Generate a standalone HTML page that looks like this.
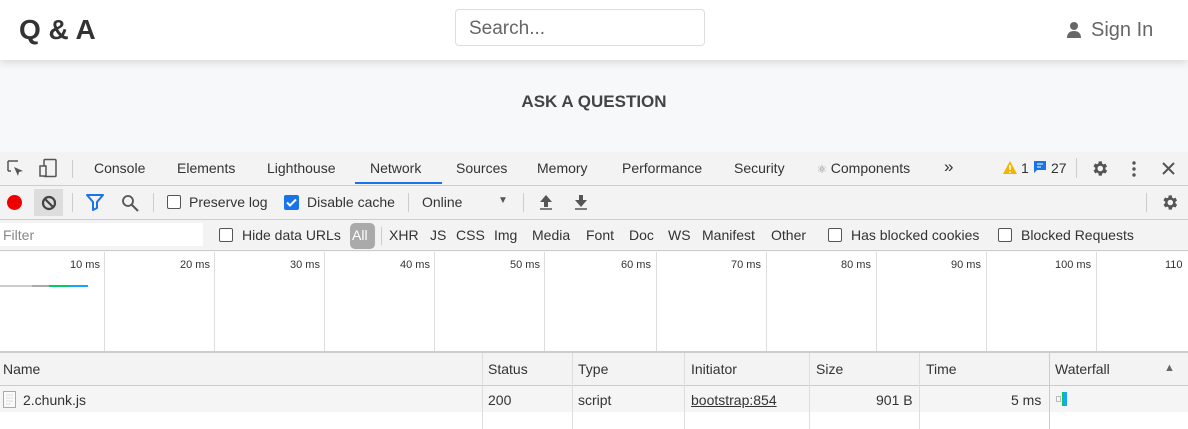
<!DOCTYPE html>
<html><head><style>
*{margin:0;padding:0;box-sizing:border-box}
body{width:1188px;height:429px;overflow:hidden;background:#f7f8fa;font-family:"Liberation Sans",sans-serif;position:relative;color:#333}
.a{position:absolute;white-space:nowrap}
.t{font-size:14px;color:#333}
.cb{position:absolute;width:14px;height:14px;border:1px solid #555;border-radius:2px;background:#fff}
.vl{position:absolute;width:1px;background:#ccc}
</style></head><body>
<div class="a" style="left:0;top:0;width:1188px;height:60px;background:#fff;box-shadow:0 3px 8px rgba(0,0,0,.12)"></div>
<div class="a" style="left:19px;top:14px;font-size:28px;font-weight:bold;color:#333">Q &amp; A</div>
<div class="a" style="left:455px;top:9px;width:250px;height:37px;border:1px solid #ddd;border-radius:4px;background:#fff;font-size:19px;color:#666;padding:8px 13px">Search...</div>
<svg class="a" style="left:1066px;top:21px" width="16" height="18" viewBox="0 0 16 18"><circle cx="8" cy="5" r="4" fill="#666"/><path d="M1 17c0-5 3-7 7-7s7 2 7 7z" fill="#666"/></svg>
<div class="a" style="left:1091px;top:19px;font-size:20px;color:#666">Sign In</div>
<div class="a" style="left:0;top:92px;width:1188px;text-align:center;font-size:17px;font-weight:bold;color:#444">ASK A QUESTION</div>

<!-- tab bar -->
<div class="a" style="left:0;top:152px;width:1188px;height:34px;background:#f3f3f3;border-bottom:1px solid #ccc"></div>
<svg class="a" style="left:6px;top:159px" width="20" height="20" viewBox="0 0 20 20"><path d="M2 2h10M2 2v10M2 12h3" stroke="#555" stroke-width="1.5" fill="none"/><path d="M8 8l9 4-4 1-1 4z" fill="#555"/></svg>
<svg class="a" style="left:38px;top:158px" width="20" height="20" viewBox="0 0 20 20"><rect x="6" y="1.5" width="12" height="17" rx="1" stroke="#555" stroke-width="1.5" fill="none"/><rect x="2" y="8" width="6" height="10" stroke="#555" stroke-width="1.5" fill="#f3f3f3"/></svg>
<div class="vl" style="left:72px;top:160px;height:18px"></div>
<div class="a t" style="left:94px;top:160px">Console</div>
<div class="a t" style="left:177px;top:160px">Elements</div>
<div class="a t" style="left:267px;top:160px">Lighthouse</div>
<div class="a t" style="left:370px;top:160px">Network</div>
<div class="a" style="left:355px;top:182px;width:87px;height:2px;background:#1a73e8"></div>
<div class="a t" style="left:456px;top:160px">Sources</div>
<div class="a t" style="left:537px;top:160px">Memory</div>
<div class="a t" style="left:622px;top:160px">Performance</div>
<div class="a t" style="left:734px;top:160px">Security</div>
<div class="a t" style="left:817px;top:160px"><span style="color:#888;font-size:11px">⚛</span> Components</div>
<div class="a t" style="left:944px;top:157px;font-size:17px">»</div>
<svg class="a" style="left:1003px;top:161px" width="14" height="13" viewBox="0 0 14 13"><path d="M7 0l7 13H0z" fill="#f4b400"/><path d="M7 4v5M7 10.5v1.5" stroke="#fff" stroke-width="1.6"/></svg>
<div class="a t" style="left:1021px;top:160px">1</div>
<svg class="a" style="left:1034px;top:161px" width="12" height="12" viewBox="0 0 12 12"><path d="M0 0h12v9H3l-3 3z" fill="#1a73e8"/><path d="M3 3h6M3 6h4" stroke="#fff"/></svg>
<div class="a t" style="left:1051px;top:160px">27</div>
<div class="vl" style="left:1076px;top:158px;height:20px"></div>
<svg class="a" style="left:1090px;top:159px" width="19" height="19" viewBox="0 0 24 24"><path fill="#555" d="M19.4 13a7.5 7.5 0 000-2l2.1-1.6-2-3.5-2.5 1a7 7 0 00-1.7-1L15 3h-4l-.4 2.7a7 7 0 00-1.7 1l-2.5-1-2 3.5L6.6 11a7.5 7.5 0 000 2l-2.1 1.6 2 3.5 2.5-1a7 7 0 001.7 1L11 21h4l.4-2.7a7 7 0 001.7-1l2.5 1 2-3.5zM13 15.5a3.5 3.5 0 110-7 3.5 3.5 0 010 7z"/></svg>
<svg class="a" style="left:1131px;top:160px" width="6" height="18" viewBox="0 0 6 18"><circle cx="3" cy="3" r="1.7" fill="#555"/><circle cx="3" cy="9" r="1.7" fill="#555"/><circle cx="3" cy="15" r="1.7" fill="#555"/></svg>
<svg class="a" style="left:1162px;top:162px" width="13" height="13" viewBox="0 0 13 13"><path d="M1 1l11 11M12 1L1 12" stroke="#555" stroke-width="2"/></svg>

<!-- toolbar -->
<div class="a" style="left:0;top:186px;width:1188px;height:34px;background:#f3f3f3;border-bottom:1px solid #ccc"></div>
<div class="a" style="left:7px;top:195px;width:15px;height:15px;border-radius:50%;background:#e00"></div>
<div class="a" style="left:34px;top:189px;width:29px;height:27px;background:#ddd"></div>
<svg class="a" style="left:41px;top:195px" width="16" height="16" viewBox="0 0 16 16"><circle cx="8" cy="8" r="6" stroke="#444" stroke-width="2.2" fill="none"/><path d="M4 4l8 8" stroke="#444" stroke-width="2.2"/></svg>
<div class="vl" style="left:72px;top:193px;height:19px"></div>
<svg class="a" style="left:86px;top:194px" width="18" height="17" viewBox="0 0 18 17"><path d="M1 1h16l-6 7v6l-4 2V8z" stroke="#1a73e8" stroke-width="2" fill="none" stroke-linejoin="round"/></svg>
<svg class="a" style="left:121px;top:194px" width="18" height="18" viewBox="0 0 18 18"><circle cx="7" cy="7" r="5" stroke="#555" stroke-width="1.8" fill="none"/><path d="M11 11l6 6" stroke="#555" stroke-width="2"/></svg>
<div class="vl" style="left:153px;top:193px;height:19px"></div>
<div class="cb" style="left:167px;top:195px"></div>
<div class="a t" style="left:189px;top:194px">Preserve log</div>
<div class="a" style="left:284px;top:195px;width:15px;height:15px;border-radius:2px;background:#1a73e8"></div>
<svg class="a" style="left:284px;top:195px" width="15" height="15" viewBox="0 0 15 15"><path d="M3 7.5l3 3 6-6" stroke="#fff" stroke-width="2" fill="none"/></svg>
<div class="a t" style="left:307px;top:194px">Disable cache</div>
<div class="vl" style="left:408px;top:193px;height:19px"></div>
<div class="a t" style="left:422px;top:194px">Online</div>
<div class="a" style="left:498px;top:195px;font-size:10px;color:#555">▼</div>
<div class="vl" style="left:523px;top:193px;height:19px"></div>
<svg class="a" style="left:539px;top:194px" width="14" height="16" viewBox="0 0 14 16"><path d="M7 1l6 7H9v5H5V8H1z" fill="#555"/><path d="M1 15h12" stroke="#555" stroke-width="1.5"/></svg>
<svg class="a" style="left:574px;top:194px" width="14" height="16" viewBox="0 0 14 16"><path d="M7 13l6-7H9V1H5v5H1z" fill="#555"/><path d="M1 15h12" stroke="#555" stroke-width="1.5"/></svg>
<div class="vl" style="left:1146px;top:193px;height:19px"></div>
<svg class="a" style="left:1160px;top:193px" width="19" height="19" viewBox="0 0 24 24"><path fill="#555" d="M19.4 13a7.5 7.5 0 000-2l2.1-1.6-2-3.5-2.5 1a7 7 0 00-1.7-1L15 3h-4l-.4 2.7a7 7 0 00-1.7 1l-2.5-1-2 3.5L6.6 11a7.5 7.5 0 000 2l-2.1 1.6 2 3.5 2.5-1a7 7 0 001.7 1L11 21h4l.4-2.7a7 7 0 001.7-1l2.5 1 2-3.5zM13 15.5a3.5 3.5 0 110-7 3.5 3.5 0 010 7z"/></svg>

<!-- filter row -->
<div class="a" style="left:0;top:220px;width:1188px;height:31px;background:#f3f3f3;border-bottom:1px solid #ccc"></div>
<div class="a" style="left:0;top:223px;width:203px;height:23px;background:#fff;font-size:14px;color:#888;padding:4px 3px">Filter</div>
<div class="cb" style="left:219px;top:228px"></div>
<div class="a t" style="left:242px;top:227px">Hide data URLs</div>
<div class="a" style="left:350px;top:223px;width:25px;height:26px;background:#aaa;border-radius:5px;color:#fff;font-size:14px;padding:4px 2px">All</div>
<div class="vl" style="left:381px;top:227px;height:18px"></div>
<div class="a t" style="left:389px;top:227px">XHR</div>
<div class="a t" style="left:430px;top:227px">JS</div>
<div class="a t" style="left:456px;top:227px">CSS</div>
<div class="a t" style="left:494px;top:227px">Img</div>
<div class="a t" style="left:532px;top:227px">Media</div>
<div class="a t" style="left:586px;top:227px">Font</div>
<div class="a t" style="left:629px;top:227px">Doc</div>
<div class="a t" style="left:668px;top:227px">WS</div>
<div class="a t" style="left:702px;top:227px">Manifest</div>
<div class="a t" style="left:771px;top:227px">Other</div>
<div class="cb" style="left:828px;top:228px"></div>
<div class="a t" style="left:851px;top:227px">Has blocked cookies</div>
<div class="cb" style="left:998px;top:228px"></div>
<div class="a t" style="left:1021px;top:227px">Blocked Requests</div>

<!-- timeline -->
<div class="a" style="left:0;top:252px;width:1188px;height:99px;background:#fff"></div>
<div class="vl" style="left:104px;top:252px;height:99px;background:#ddd"></div>
<div class="vl" style="left:214px;top:252px;height:99px;background:#ddd"></div>
<div class="vl" style="left:324px;top:252px;height:99px;background:#ddd"></div>
<div class="vl" style="left:434px;top:252px;height:99px;background:#ddd"></div>
<div class="vl" style="left:544px;top:252px;height:99px;background:#ddd"></div>
<div class="vl" style="left:656px;top:252px;height:99px;background:#ddd"></div>
<div class="vl" style="left:766px;top:252px;height:99px;background:#ddd"></div>
<div class="vl" style="left:876px;top:252px;height:99px;background:#ddd"></div>
<div class="vl" style="left:986px;top:252px;height:99px;background:#ddd"></div>
<div class="vl" style="left:1096px;top:252px;height:99px;background:#ddd"></div>
<div class="a" style="top:259px;font-size:11px;color:#333;left:70px">10 ms</div>
<div class="a" style="top:259px;font-size:11px;color:#333;left:180px">20 ms</div>
<div class="a" style="top:259px;font-size:11px;color:#333;left:290px">30 ms</div>
<div class="a" style="top:259px;font-size:11px;color:#333;left:400px">40 ms</div>
<div class="a" style="top:259px;font-size:11px;color:#333;left:510px">50 ms</div>
<div class="a" style="top:259px;font-size:11px;color:#333;left:621px">60 ms</div>
<div class="a" style="top:259px;font-size:11px;color:#333;left:731px">70 ms</div>
<div class="a" style="top:259px;font-size:11px;color:#333;left:841px">80 ms</div>
<div class="a" style="top:259px;font-size:11px;color:#333;left:951px">90 ms</div>
<div class="a" style="top:259px;font-size:11px;color:#333;left:1055px">100 ms</div>
<div class="a" style="top:259px;font-size:11px;color:#333;left:1165px">110</div>
<div class="a" style="left:0;top:285px;width:32px;height:2px;background:#ccc"></div>
<div class="a" style="left:32px;top:285px;width:17px;height:2px;background:#aaa"></div>
<div class="a" style="left:49px;top:285px;width:21px;height:2px;background:#0c6"></div>
<div class="a" style="left:70px;top:285px;width:18px;height:2px;background:#1aa3ff"></div>
<div class="a" style="left:0;top:351px;width:1188px;height:2px;background:#ccc"></div>

<!-- table -->
<div class="a" style="left:0;top:353px;width:1188px;height:33px;background:#f3f3f3;border-bottom:1px solid #ccc"></div>
<div class="a" style="left:0;top:386px;width:1188px;height:26px;background:#f5f5f5"></div>
<div class="a" style="left:0;top:412px;width:1188px;height:17px;background:#fff"></div>
<div class="vl" style="left:482px;top:353px;height:76px;background:#ddd"></div>
<div class="vl" style="left:572px;top:353px;height:76px;background:#ddd"></div>
<div class="vl" style="left:684px;top:353px;height:76px;background:#ddd"></div>
<div class="vl" style="left:809px;top:353px;height:76px;background:#ddd"></div>
<div class="vl" style="left:919px;top:353px;height:76px;background:#ddd"></div>
<div class="vl" style="left:1049px;top:353px;height:76px;background:#ccc"></div>
<div class="a t" style="left:3px;top:361px">Name</div>
<div class="a t" style="left:488px;top:361px">Status</div>
<div class="a t" style="left:578px;top:361px">Type</div>
<div class="a t" style="left:691px;top:361px">Initiator</div>
<div class="a t" style="left:816px;top:361px">Size</div>
<div class="a t" style="left:926px;top:361px">Time</div>
<div class="a t" style="left:1055px;top:361px">Waterfall</div>
<div class="a" style="left:1164px;top:362px;font-size:11px;color:#666">▲</div>
<svg class="a" style="left:3px;top:391px" width="13" height="17" viewBox="0 0 13 17"><rect x=".5" y=".5" width="12" height="16" fill="#fafafa" stroke="#aaa"/><path d="M3 4h7M3 7h7M3 10h7M3 13h5" stroke="#ddd"/></svg>
<div class="a t" style="left:23px;top:392px">2.chunk.js</div>
<div class="a t" style="left:488px;top:392px">200</div>
<div class="a t" style="left:578px;top:392px">script</div>
<div class="a t" style="left:691px;top:392px;text-decoration:underline">bootstrap:854</div>
<div class="a t" style="left:876px;top:392px">901 B</div>
<div class="a t" style="left:1011px;top:392px">5 ms</div>
<div class="a" style="left:1056px;top:396px;width:5px;height:6px;border:1px solid #bbb"></div>
<div class="a" style="left:1062px;top:392px;width:2px;height:14px;background:#0c6"></div>
<div class="a" style="left:1064px;top:392px;width:3px;height:14px;background:#1aa3ff"></div>
</body></html>
